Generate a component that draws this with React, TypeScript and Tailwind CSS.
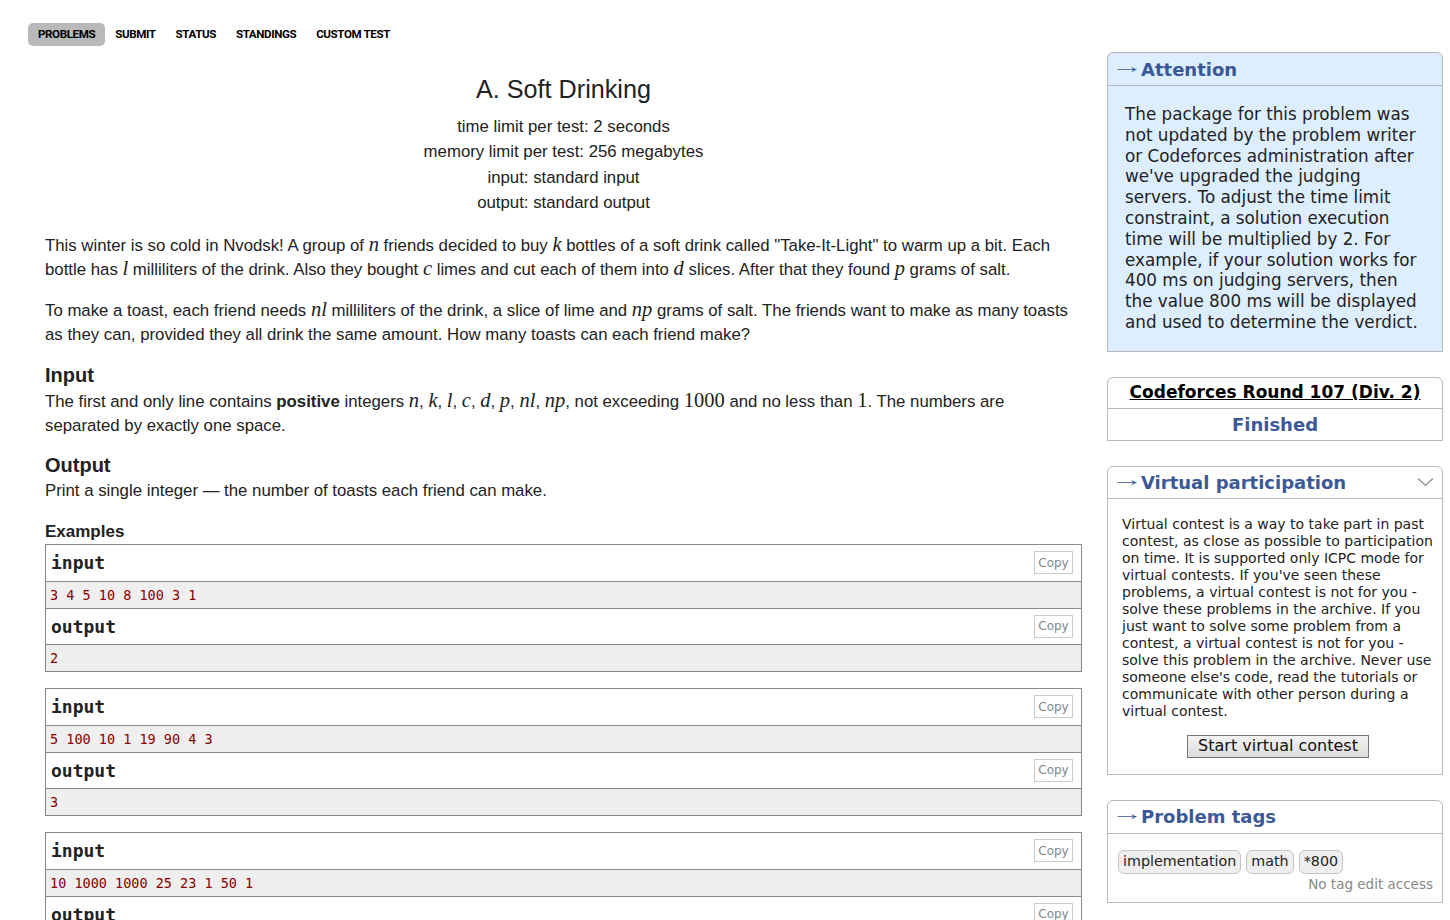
import React from "react";

const M = ({ children }: { children: React.ReactNode }) => (
  <span className="font-['Liberation_Serif',serif] italic text-[20.5px] leading-none">{children}</span>
);
const N = ({ children }: { children: React.ReactNode }) => (
  <span className="font-['Liberation_Serif',serif] text-[20.5px] leading-none">{children}</span>
);

const Sample = ({ input, output }: { input: string; output: string }) => (
  <div className="border border-[#888] font-['DejaVu_Sans_Mono',monospace]">
    <div className="flex h-[36px] items-center justify-between pl-[5px] pr-[8px]">
      <span className="text-[18px] font-bold text-[#222]">input</span>
      <span className="flex h-[23px] w-[39px] items-center justify-center border border-[#ccc] font-['DejaVu_Sans',sans-serif] text-[12px] text-[#888]">Copy</span>
    </div>
    <div className="flex h-[27px] items-center border-t border-[#888] bg-[#efefef] pl-[4px] text-[13.5px] text-[#8b0000]">{input}</div>
    <div className="flex h-[36px] items-center justify-between border-t border-[#888] pl-[5px] pr-[8px]">
      <span className="text-[18px] font-bold text-[#222]">output</span>
      <span className="flex h-[23px] w-[39px] items-center justify-center border border-[#ccc] font-['DejaVu_Sans',sans-serif] text-[12px] text-[#888]">Copy</span>
    </div>
    <div className="flex h-[27px] items-center border-t border-[#888] bg-[#efefef] pl-[4px] text-[13.5px] text-[#8b0000]">{output}</div>
  </div>
);

const Arrow = () => (
  <span className="mr-[11px] inline-block origin-left -translate-y-[3px] scale-x-[1.7] font-['Liberation_Sans',sans-serif] text-[19px] font-normal leading-none">→</span>
);

export default function App() {
  return (
    <div className="min-h-[920px] bg-white pt-[23px] text-[#222]">
      <div className="ml-[28px] flex font-['Roboto',sans-serif] text-[11.6px] font-bold tracking-[-0.4px] text-black">
        <span className="flex h-[23px] items-center rounded-[5px] bg-[#b9b9b9] px-[10px]">PROBLEMS</span>
        <span className="flex h-[23px] items-center px-[10px]">SUBMIT</span>
        <span className="flex h-[23px] items-center px-[10px]">STATUS</span>
        <span className="flex h-[23px] items-center px-[10px]">STANDINGS</span>
        <span className="flex h-[23px] items-center px-[10px]">CUSTOM TEST</span>
      </div>
      <div className="mt-[6px] flex">
        <div className="ml-[45px] w-[1037px] font-['Liberation_Sans',Arial,sans-serif]">
          <div className="mt-[22px] text-center text-[25.2px] leading-[30px]">A. Soft Drinking</div>
          <div className="mt-[10px] text-center text-[16.8px] leading-[25.3px]">
            <div>time limit per test: 2 seconds</div>
            <div>memory limit per test: 256 megabytes</div>
            <div>input: standard input</div>
            <div>output: standard output</div>
          </div>
          <div className="text-[16.8px] leading-[23.5px]">
            <p className="mt-[19px]">
              This winter is so cold in Nvodsk! A group of <M>n</M> friends decided to buy <M>k</M> bottles of a soft drink called "Take-It-Light" to warm up a bit. Each bottle has <M>l</M> milliliters of the drink. Also they bought <M>c</M> limes and cut each of them into <M>d</M> slices. After that they found <M>p</M> grams of salt.
            </p>
            <p className="mt-[18px]">
              To make a toast, each friend needs <M>nl</M> milliliters of the drink, a slice of lime and <M>np</M> grams of salt. The friends want to make as many toasts as they can, provided they all drink the same amount. How many toasts can each friend make?
            </p>
            <div className="mt-[17px] text-[20px] font-bold leading-[24px]">Input</div>
            <p className="mt-[3px]">
              The first and only line contains <b>positive</b> integers <M>n</M>, <M>k</M>, <M>l</M>, <M>c</M>, <M>d</M>, <M>p</M>, <M>nl</M>, <M>np</M>, not exceeding <N>1000</N> and no less than <N>1</N>. The numbers are separated by exactly one space.
            </p>
            <div className="mt-[16px] text-[20px] font-bold leading-[24px]">Output</div>
            <p className="mt-[2px]">Print a single integer — the number of toasts each friend can make.</p>
            <div className="mt-[17px] text-[17px] font-bold leading-[24px]">Examples</div>
          </div>
          <div className="flex flex-col gap-[16px]">
            <Sample input="3 4 5 10 8 100 3 1" output="2" />
            <Sample input="5 100 10 1 19 90 4 3" output="3" />
            <Sample input="10 1000 1000 25 23 1 50 1" output="0" />
          </div>
        </div>

        <div className="ml-[25px] flex w-[336px] flex-col gap-[25px] font-['DejaVu_Sans',Verdana,sans-serif]">
          <div className="rounded-t-[6px] border border-[#b9b9b9] bg-[#ddeeff]">
            <div className="flex h-[33px] items-center border-b border-[#b9b9b9] pl-[3px] text-[18px] font-bold text-[#3b5998]">
              <Arrow />Attention
            </div>
            <div className="pb-[18px] pl-[17px] pr-[16px] pt-[18px] text-[16.8px] leading-[20.8px]">
              The package for this problem was not updated by the problem writer or Codeforces administration after we've upgraded the judging servers. To adjust the time limit constraint, a solution execution time will be multiplied by 2. For example, if your solution works for 400 ms on judging servers, then the value 800 ms will be displayed and used to determine the verdict.
            </div>
          </div>

          <div className="rounded-t-[6px] border border-[#b9b9b9]">
            <div className="flex h-[31px] items-center justify-center border-b border-[#b9b9b9] text-[17px] font-bold text-black underline">
              Codeforces Round 107 (Div. 2)
            </div>
            <div className="flex h-[31px] items-center justify-center text-[18px] font-bold text-[#3b5998]">Finished</div>
          </div>

          <div className="rounded-t-[6px] border border-[#b9b9b9]">
            <div className="flex h-[32px] items-center justify-between border-b border-[#b9b9b9] pl-[3px] pr-[8px] text-[18px] font-bold text-[#3b5998]">
              <span className="flex items-center"><Arrow />Virtual participation</span>
              <svg width="17" height="10" viewBox="0 0 17 10" fill="none" stroke="#888" strokeWidth="1.2">
                <path d="M1 1.5 L8.5 8.5 L16 1.5" />
              </svg>
            </div>
            <div className="pb-[16px] pl-[14px] pr-[8px] pt-[17px] text-[14px] leading-[17px]">
              Virtual contest is a way to take part in past contest, as close as possible to participation on time. It is supported only ICPC mode for virtual contests. If you've seen these problems, a virtual contest is not for you - solve these problems in the archive. If you just want to solve some problem from a contest, a virtual contest is not for you - solve this problem in the archive. Never use someone else's code, read the tutorials or communicate with other person during a virtual contest.
              <div className="mt-[15px] flex justify-center">
                <span className="flex h-[23px] items-center border border-[#767676] bg-gradient-to-b from-[#f3f3f3] to-[#dddddd] px-[10px] text-[16px] leading-none text-[#111]">Start virtual contest</span>
              </div>
            </div>
          </div>

          <div className="rounded-t-[6px] border border-[#b9b9b9]">
            <div className="flex h-[33px] items-center border-b border-[#b9b9b9] pl-[3px] text-[18px] font-bold text-[#3b5998]">
              <Arrow />Problem tags
            </div>
            <div className="pb-[9px] pl-[10px] pr-[9px] pt-[16px]">
              <div className="flex gap-[5px]">
                {["implementation", "math", "*800"].map((t) => (
                  <span key={t} className="flex h-[24px] items-center rounded-[6px] border border-[#c6c6c6] bg-[#efefef] px-[4px] text-[14.3px] text-[#222]">{t}</span>
                ))}
              </div>
              <div className="mt-[2px] text-right text-[13.5px] leading-[17px] text-[#888]">No tag edit access</div>
            </div>
          </div>
        </div>
      </div>
    </div>
  );
}
